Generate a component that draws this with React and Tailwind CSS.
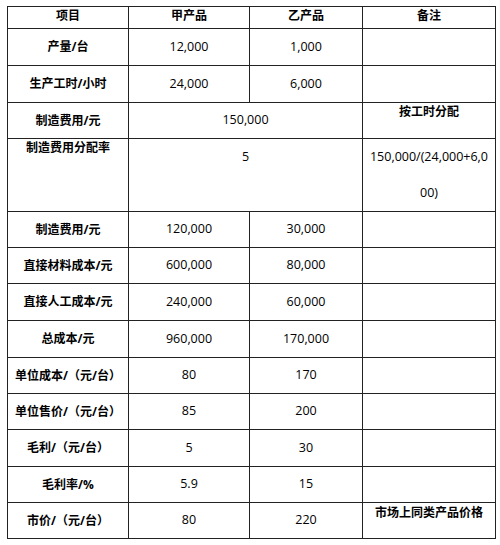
import React from "react";

const rows = [
  ["产量/台", "12,000", "1,000", "", 37],
  ["生产工时/小时", "24,000", "6,000", "", 37],
];

const lower = [
  ["制造费用/元", "120,000", "30,000", 36],
  ["直接材料成本/元", "600,000", "80,000", 36],
  ["直接人工成本/元", "240,000", "60,000", 37],
  ["总成本/元", "960,000", "170,000", 37],
  ["单位成本/（元/台）", "80", "170", 36],
  ["单位售价/（元/台）", "85", "200", 36],
  ["毛利/（元/台）", "5", "30", 37],
  ["毛利率/%", "5.9", "15", 36],
];

const cell = "border border-[#222] text-center p-0";
const label = "font-bold text-[12px]";
const num = "text-[12.5px] font-medium";

export default function App() {
  return (
    <div
      className="bg-white w-[500px] h-[545px] pt-[6px] pl-[7px] text-[#000]"
      style={{ fontFamily: '"Open Sans", "Noto Sans CJK SC", sans-serif' }}
    >
      <table className="border-collapse table-fixed w-[488px]">
        <colgroup>
          <col className="w-[121px]" />
          <col className="w-[121px]" />
          <col className="w-[113px]" />
          <col className="w-[133px]" />
        </colgroup>
        <tbody>
          <tr className="h-[22px]">
            {["项目", "甲产品", "乙产品", "备注"].map((t) => (
              <td key={t} className={`${cell} ${label} align-top leading-[18px]`}>
                {t}
              </td>
            ))}
          </tr>
          {rows.map(([a, b, c, d, h]) => (
            <tr key={a} style={{ height: h }}>
              <td className={`${cell} ${label}`}>{a}</td>
              <td className={`${cell} ${num}`}>{b}</td>
              <td className={`${cell} ${num}`}>{c}</td>
              <td className={cell}>{d}</td>
            </tr>
          ))}
          <tr className="h-[36px]">
            <td className={`${cell} ${label}`}>制造费用/元</td>
            <td colSpan={2} className={`${cell} ${num}`}>150,000</td>
            <td className={`${cell} ${label} align-top leading-[18px]`}>按工时分配</td>
          </tr>
          <tr className="h-[73px]">
            <td className={`${cell} ${label} align-top leading-[18px]`}>制造费用分配率</td>
            <td colSpan={2} className={`${cell} ${num} align-top leading-[36px]`}>5</td>
            <td className={`${cell} ${num} align-top leading-[36px]`}>
              150,000/(24,000+6,0
              <br />
              00)
            </td>
          </tr>
          {lower.map(([a, b, c, h]) => (
            <tr key={a} style={{ height: h }}>
              <td className={`${cell} ${label}`}>{a}</td>
              <td className={`${cell} ${num}`}>{b}</td>
              <td className={`${cell} ${num}`}>{c}</td>
              <td className={cell}></td>
            </tr>
          ))}
          <tr className="h-[36px]">
            <td className={`${cell} ${label}`}>市价/（元/台）</td>
            <td className={`${cell} ${num}`}>80</td>
            <td className={`${cell} ${num}`}>220</td>
            <td className={`${cell} ${label} align-top leading-[20px]`}>市场上同类产品价格</td>
          </tr>
        </tbody>
      </table>
    </div>
  );
}
